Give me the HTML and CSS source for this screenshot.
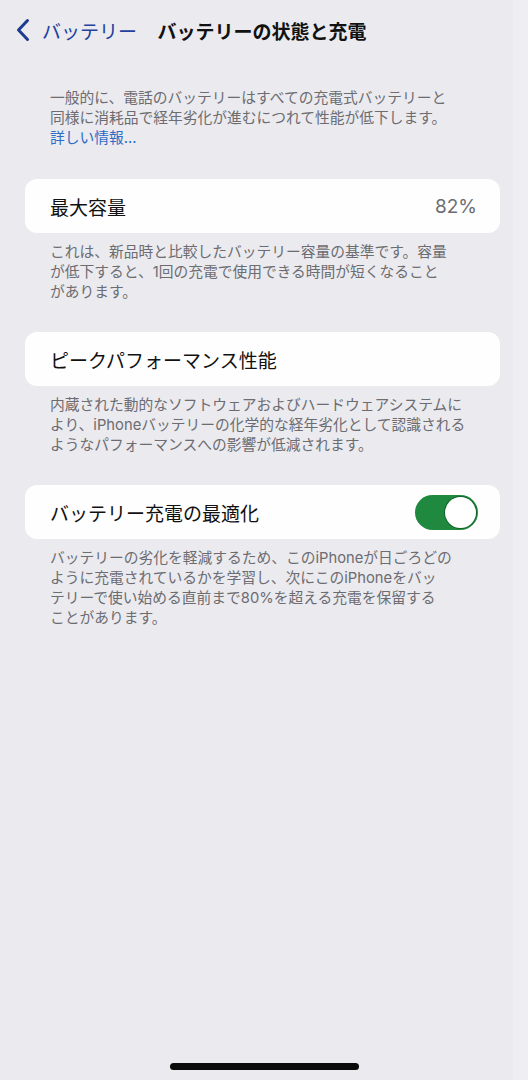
FILE: index.html
```html
<!DOCTYPE html>
<html lang="ja">
<head>
    <meta charset="UTF-8">
    <meta name="viewport" content="width=device-width, initial-scale=1.0">
    <title>バッテリーの状態と充電</title>
    <link rel="stylesheet" href="styles.css">
</head>
<body>

    <header class="nav">
        <a class="nav-back" href="#">
            <svg class="chevron" width="14" height="24" viewBox="0 0 14 24">
                <path d="M11.5 2.5 L2.5 12 L11.5 21.5" fill="none" stroke="currentColor" stroke-width="3" stroke-linecap="round" stroke-linejoin="round"/>
            </svg>
            <span>バッテリー</span>
        </a>
        <h1 class="nav-title">バッテリーの状態と充電</h1>
    </header>

    <main class="list">
        <p class="note intro">
            一般的に、電話のバッテリーはすべての充電式バッテリーと<br>
            同様に消耗品で経年劣化が進むにつれて性能が低下します。<br>
            <a class="link" href="#">詳しい情報...</a>
        </p>

        <section class="group">
            <div class="cell">
                <span class="cell-label">最大容量</span>
                <span class="cell-value">82%</span>
            </div>
            <p class="note">
                これは、新品時と比較したバッテリー容量の基準です。容量<br>
                が低下すると、1回の充電で使用できる時間が短くなること<br>
                があります。
            </p>
        </section>

        <section class="group">
            <div class="cell">
                <span class="cell-label">ピークパフォーマンス性能</span>
            </div>
            <p class="note">
                内蔵された動的なソフトウェアおよびハードウェアシステムに<br>
                より、iPhoneバッテリーの化学的な経年劣化として認識される<br>
                ようなパフォーマンスへの影響が低減されます。
            </p>
        </section>

        <section class="group">
            <div class="cell">
                <span class="cell-label">バッテリー充電の最適化</span>
                <span class="toggle on"><span class="knob"></span></span>
            </div>
            <p class="note">
                バッテリーの劣化を軽減するため、このiPhoneが日ごろどの<br>
                ように充電されているかを学習し、次にこのiPhoneをバッ<br>
                テリーで使い始める直前まで80%を超える充電を保留する<br>
                ことがあります。
            </p>
        </section>
    </main>

    <div class="home-bar"></div>

</body>
</html>
```

FILE: styles.css
```css
body {
    margin: 0;
    height: 1080px;
    display: flex;
    flex-direction: column;
    font-family: Inter, "Noto Sans CJK JP", sans-serif;
    color: #111;
    background: linear-gradient(to right, #eaeaef 513px, #efeff3 513px);
}

/* navigation bar */
.nav {
    height: 60px;
    padding: 0 16px;
    display: grid;
    grid-template-columns: 1fr auto 1fr;
    align-items: center;
}
.nav-back {
    display: flex;
    align-items: center;
    gap: 12px;
    color: #22409c;
    text-decoration: none;
    font-size: 19px;
}
.chevron {
    color: #1d3b90;
}
.nav-title {
    margin: 0 0 0 -4px;
    font-size: 19px;
    font-weight: 700;
}

.list {
    padding: 0 28px 0 25px;
    flex: 1;
}

/* footer texts under the cells */
.note {
    margin: 0;
    padding: 9px 25px 0;
    font-size: 14.75px;
    line-height: 20px;
    color: #6c6c71;
    white-space: nowrap;
}
.intro {
    margin: 28px 0 31px;
    padding-top: 0;
}
.link {
    color: #2c6cc6;
    text-decoration: none;
}

.group + .group {
    margin-top: 30px;
}
.cell {
    height: 54px;
    padding: 0 22px 0 25px;
    display: flex;
    align-items: center;
    justify-content: space-between;
    background: #fefefe;
    border-radius: 12px;
}
.cell-label {
    font-size: 19px;
}
.cell-value {
    font-size: 19px;
    color: #6c6c71;
    margin-right: 1px;
}

/* switch */
.toggle {
    width: 63px;
    height: 35px;
    padding: 2px;
    box-sizing: border-box;
    border-radius: 18px;
    background: #dcdce0;
    display: flex;
}
.toggle.on {
    background: #1f8a3f;
    justify-content: flex-end;
}
.knob {
    width: 31px;
    height: 31px;
    border-radius: 50%;
    background: #fff;
    box-shadow: 0 0 0 1px rgba(10, 70, 30, 0.55);
}

.home-bar {
    width: 189px;
    height: 7px;
    margin: 0 auto 10px;
    border-radius: 4px;
    background: #0a0a0a;
}
```
